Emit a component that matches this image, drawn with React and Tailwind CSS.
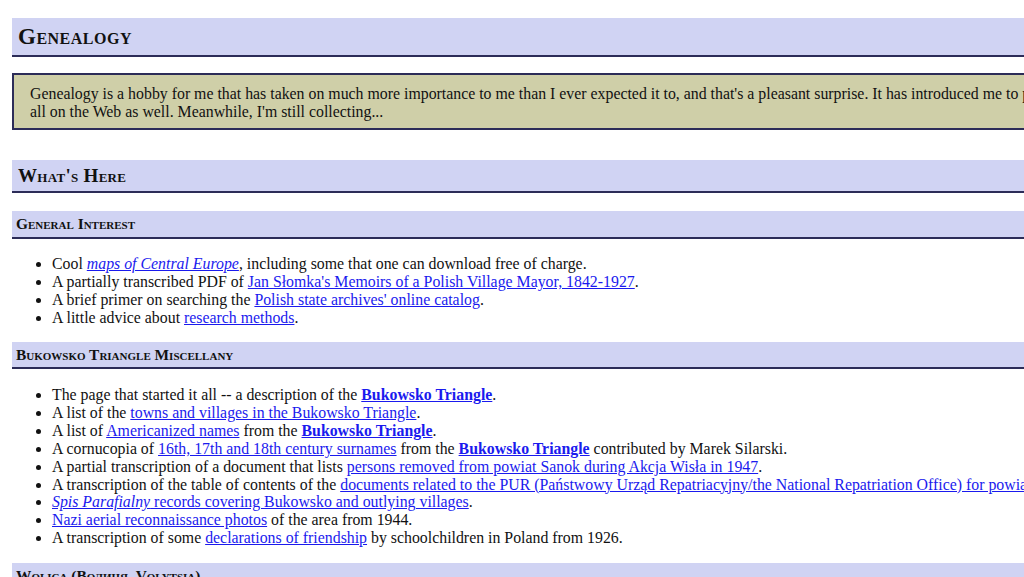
const serif = { fontFamily: '"Liberation Serif", "Times New Roman", serif' };

const general = [
  <>Cool <a href="#maps"><i>maps of Central Europe</i></a>, including some that one can download free of charge.</>,
  <>A partially transcribed PDF of <a href="#slomka">Jan Słomka's Memoirs of a Polish Village Mayor, 1842-1927</a>.</>,
  <>A brief primer on searching the <a href="#archives">Polish state archives' online catalog</a>.</>,
  <>A little advice about <a href="#methods">research methods</a>.</>,
];

const bukowsko = [
  <>The page that started it all -- a description of the <a href="#triangle"><b>Bukowsko Triangle</b></a>.</>,
  <>A list of the <a href="#towns">towns and villages in the Bukowsko Triangle</a>.</>,
  <>A list of <a href="#names">Americanized names</a> from the <a href="#triangle"><b>Bukowsko Triangle</b></a>.</>,
  <>A cornucopia of <a href="#surnames">16th, 17th and 18th century surnames</a> from the <a href="#triangle"><b>Bukowsko Triangle</b></a> contributed by Marek Silarski.</>,
  <>A partial transcription of a document that lists <a href="#akcja">persons removed from powiat Sanok during Akcja Wisła in 1947</a>.</>,
  <>A transcription of the table of contents of the <a href="#pur">documents related to the PUR (Państwowy Urząd Repatriacyjny/the National Repatriation Office) for powiat Sanok</a>.</>,
  <><a href="#spis"><i>Spis Parafialny</i> records covering Bukowsko and outlying villages</a>.</>,
  <><a href="#aerial">Nazi aerial reconnaissance photos</a> of the area from 1944.</>,
  <>A transcription of some <a href="#friendship">declarations of friendship</a> by schoolchildren in Poland from 1926.</>,
];

function Heading({ size, height, pad, children }) {
  return (
    <div className={`flex items-center bg-[#d0d3f3] border-b-2 border-[#2c2c58] text-[#111] [font-variant:small-caps] ${height} ${pad} ${size}`}>
      {children}
    </div>
  );
}

function Items({ items }) {
  return (
    <ul className="list-disc pl-10 text-[15.85px] leading-[17.85px] text-[#111] [&_a]:text-[#1a1aee] [&_a]:underline">
      {items.map((item, i) => (
        <li key={i} className="whitespace-nowrap">{item}</li>
      ))}
    </ul>
  );
}

export default function App() {
  return (
    <div className="h-screen w-full overflow-hidden bg-white" style={serif}>
      <div className="w-[1500px] pl-[12px] pt-[18px]">
        <Heading size="text-[23px] font-semibold tracking-[0.5px]" height="h-[39px]" pad="pl-[6px] pt-[2px]">Genealogy</Heading>

        <div className="mt-[16px] h-[57px] bg-[#cfcfa8] border-2 border-[#2c2c58] pl-[16px] pt-[10px] text-[15.85px] leading-[18px] text-[#111]">
          Genealogy is a hobby for me that has taken on much more importance to me than I ever expected it to, and that's a pleasant surprise. It has introduced me to people all over the world, and someday I hope to put it
          <br />
          all on the Web as well. Meanwhile, I'm still collecting...
        </div>

        <div className="mt-[30px]">
          <Heading size="text-[19px] font-semibold tracking-[0.3px]" height="h-[33px]" pad="pl-[6px] pt-[1px]">What's Here</Heading>
        </div>

        <div className="mt-[18px]">
          <Heading size="text-[15.4px] font-semibold" height="h-[28px]" pad="pl-[4px]">General Interest</Heading>
        </div>
        <div className="mt-[16px]">
          <Items items={general} />
        </div>

        <div className="mt-[16px]">
          <Heading size="text-[15.4px] font-semibold" height="h-[27px]" pad="pl-[4px]">Bukowsko Triangle Miscellany</Heading>
        </div>
        <div className="mt-[17px]">
          <Items items={bukowsko} />
        </div>

        <div className="mt-[16px]">
          <Heading size="text-[15.4px] font-semibold" height="h-[27px]" pad="pl-[4px]">Wolica (Волиця, Volytsia)</Heading>
        </div>
      </div>
    </div>
  );
}
